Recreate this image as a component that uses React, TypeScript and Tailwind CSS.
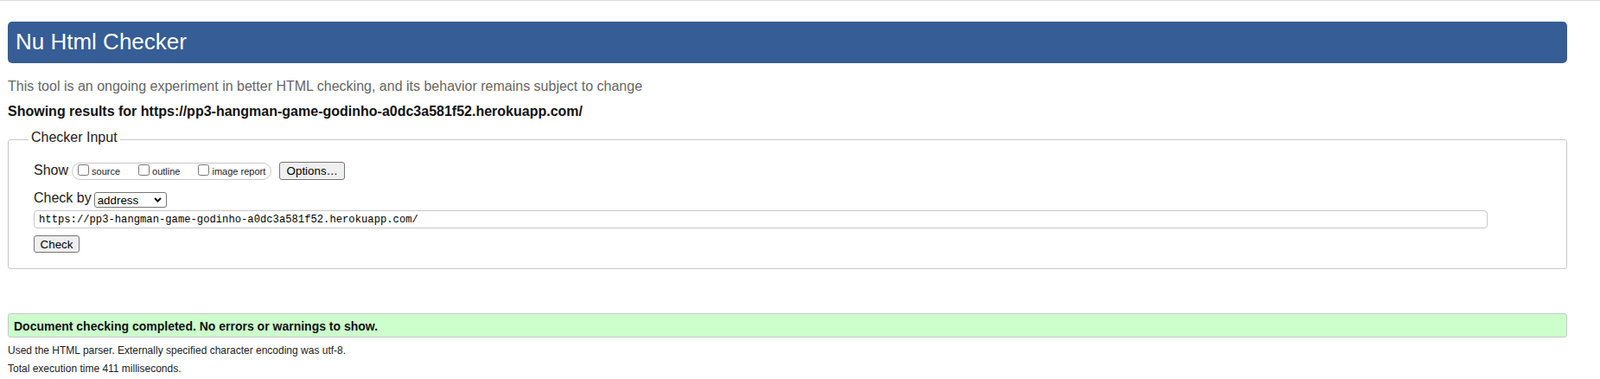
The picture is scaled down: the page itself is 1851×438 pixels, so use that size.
export default function App() {
    const url = "https://pp3-hangman-game-godinho-a0dc3a581f52.herokuapp.com/";

    return (
        <div
            className="min-h-screen bg-white border-t border-[#dcdcdc] pl-[9px] pr-[38px] text-black"
            style={{ fontFamily: '"Liberation Sans", Arial, sans-serif' }}
        >
            {/* Title bar */}
            <div className="mt-[24px] h-[48px] rounded-[5px] bg-[#365d95] flex items-center pl-[9px] pb-[3px]">
                <h1 className="text-[26px] leading-[30px] text-white font-normal">Nu Html Checker</h1>
            </div>

            <p className="mt-[18px] text-[16px] leading-[18px] text-[#666]">
                This tool is an ongoing experiment in better HTML checking, and its behavior remains subject to change
            </p>
            <p className="mt-[11px] text-[16px] leading-[18px] font-bold text-[#111]">Showing results for {url}</p>

            {/* Checker input form */}
            <fieldset className="mt-[12px] border border-[#c8c8c8] rounded-[3px] pl-[29px] pr-[29px] pb-[18px]">
                <legend className="ml-[-6px] px-[3px] pb-[4px] text-[16px] leading-[18px] text-[#222]">Checker Input</legend>

                <div className="mt-[15px] h-[21px] flex items-center">
                    <span className="text-[16px] leading-[18px] mb-[2px] text-[#222]">Show</span>
                    <div className="ml-[4px] h-[20px] inline-flex items-center border border-[#c8c8c8] rounded-full pl-[2px] pr-[6px] text-[11px] leading-[13px] text-[#222]">
                        {["source", "outline", "image report"].map((label, i) => (
                            <label key={label} className={"flex items-center " + (i < 2 ? "mr-[17px]" : "")}>
                                <input type="checkbox" className="m-0 ml-[4px] mr-[3px] mb-[3px] w-[13px] h-[13px]" />
                                <span className="mt-[2px]">{label}</span>
                            </label>
                        ))}
                    </div>
                    <button className="ml-[9px] w-[76px] h-[21px] bg-[#efefef] border border-[#767676] rounded-[3px] text-[13.33px] leading-[15px] text-black">
                        Options…
                    </button>
                </div>

                <div className="mt-[14px] h-[18px] flex items-center">
                    <span className="text-[16px] leading-[18px] mb-[4px] text-[#222]">Check by</span>
                    <div className="relative ml-[3px]">
                        <select
                            defaultValue="address"
                            className="appearance-none block w-[84px] h-[18px] bg-white border border-[#767676] rounded-[3px] pl-[3px] text-[13.33px] leading-[15px] text-black"
                        >
                            <option value="address">address</option>
                            <option value="upload">file upload</option>
                            <option value="text">text input</option>
                        </select>
                        <svg
                            className="absolute right-[6px] top-[6px] pointer-events-none"
                            width="9"
                            height="6"
                            viewBox="0 0 9 6"
                            fill="none"
                        >
                            <path d="M1 1l3.5 3.5L8 1" stroke="#111" strokeWidth="2" />
                        </svg>
                    </div>
                </div>

                <input
                    type="url"
                    defaultValue={url}
                    className="block mt-[3px] w-[1682px] h-[21px] border border-[#c8c8c8] rounded-[4px] px-[5px] text-[12.2px] text-black"
                    style={{ fontFamily: '"Liberation Mono", Consolas, monospace' }}
                />

                <button className="block mt-[8px] w-[53px] h-[20px] bg-[#efefef] border border-[#767676] rounded-[3px] text-[13.33px] leading-[15px] text-black">
                    Check
                </button>
            </fieldset>

            {/* Result */}
            <div className="mt-[51px] bg-[#ccffcc] border border-[#c8c8c8] rounded-[3px] pl-[6px] pt-[5px] pb-[3px] text-[14px] leading-[18px] font-bold text-[#111]">
                Document checking completed. No errors or warnings to show.
            </div>
            <p className="mt-[8px] text-[12px] leading-[14px] text-[#222]">
                Used the HTML parser. Externally specified character encoding was utf-8.
            </p>
            <p className="mt-[7px] text-[12px] leading-[14px] text-[#222]">Total execution time 411 milliseconds.</p>
        </div>
    );
}
